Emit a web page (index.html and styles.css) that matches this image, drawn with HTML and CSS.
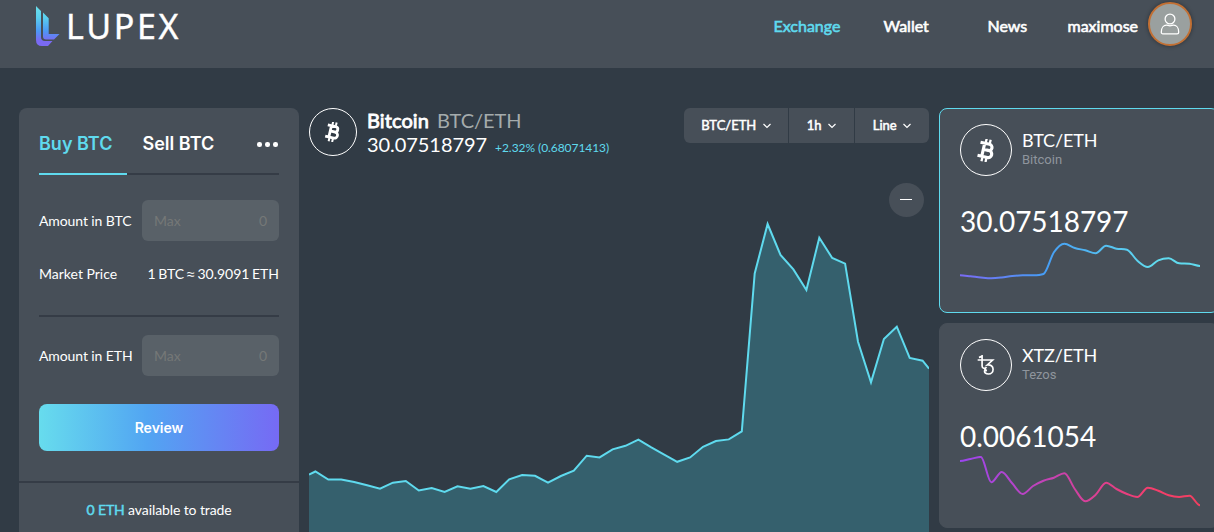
FILE: index.html
```
<!DOCTYPE html>
<html lang="en">
    <head>
        <meta charset="UTF-8">
        <meta name="viewport" content="width=device-width, initial-scale=1.0">
        <title>Lupex</title>
        <link rel="stylesheet" href="styles.css">
    </head>
    <body>
        <svg class="defs" width="0" height="0">
            <symbol id="btc" viewBox="0 0 24 24">
                <g transform="rotate(13 12 12)" fill="none" stroke="currentColor" stroke-width="3.3">
                    <path d="M4 5h9.700a3.200 3.200 0 0 1 0 6.500H8.500M4 19h10.500a3.700 3.700 0 0 0 0-7.500H8.500M8.500 4.500v15"/>
                    <path stroke-width="2.400" d="M9.400 0v4M13.700 0v4M9.400 20v4M13.700 20v4"/>
                </g>
            </symbol>
            <symbol id="xtz" viewBox="0 0 24 24">
                <path fill="none" stroke="currentColor" stroke-width="2" d="M2 6H20L13.500 12c4-.6 7 1.400 7 5 0 3.500-2.400 5.800-5.500 5.800-2.700 0-4.800-1.400-4.800-3.500 0-1.200.8-2 1.800-2M3.500 2.800c1.500-.2 2.700-.7 3.800-1.800v12.200c0 3 3.400 3.700 5.400 1.400"/>
                <circle cx="11.900" cy="18.600" r="1.400" fill="currentColor"/>
            </symbol>
        </svg>

        <header class="header">
            <a class="logo">
                <svg width="25" height="42" viewBox="0 0 25 42">
                    <defs>
                        <linearGradient id="logo-fill" gradientUnits="userSpaceOnUse" x1="0" y1="0" x2="0" y2="42">
                            <stop offset="0.1" stop-color="#67dcec"/>
                            <stop offset="0.3" stop-color="#5acfee"/>
                            <stop offset="0.62" stop-color="#4c98f5"/>
                            <stop offset="0.85" stop-color="#7a6af3"/>
                        </linearGradient>
                    </defs>
                    <path fill="url(#logo-fill)" d="M1 1l5 5v26q0 4 4 4h7.500l-4.500 5H7q-6 0-6-6z"/>
                    <path fill="url(#logo-fill)" d="M8 7.500l5.700 5.700V29h10.800l-5.500 5.500H11q-3 0-3-3z"/>
                </svg>
                <span>LUPEX</span>
            </a>
            <nav class="nav">
                <a class="exchange active">Exchange</a>
                <a class="wallet">Wallet</a>
                <a class="news">News</a>
                <a class="user">maximose</a>
                <div class="avatar">
                    <svg width="20" height="24" viewBox="0 0 20 24" fill="none" stroke="#fff" stroke-width="1.300">
                        <circle cx="10" cy="7" r="4.900"/>
                        <path d="M1.300 20.200c0-5 2.700-7 5-7 1.500 0 2 .6 3.700.6s2.200-.6 3.700-.6c2.300 0 5 2 5 7 0 1-.6 1.600-1.600 1.600H2.900c-1 0-1.600-.6-1.600-1.600z"/>
                    </svg>
                </div>
            </nav>
        </header>

        <main class="page">
            <section class="trade">
                <div class="tabs">
                    <a class="tab active">Buy BTC</a>
                    <a class="tab">Sell BTC</a>
                    <div class="dots"><i></i><i></i><i></i></div>
                </div>
                <div class="row">
                    <label>Amount in BTC</label>
                    <div class="field"><span>Max</span><span>0</span></div>
                </div>
                <div class="row price">
                    <span>Market Price</span>
                    <span class="rate">1 BTC <span class="approx">≈</span> 30.9091 ETH</span>
                </div>
                <div class="row eth">
                    <label>Amount in ETH</label>
                    <div class="field"><span>Max</span><span>0</span></div>
                </div>
                <button class="review">Review</button>
                <div class="available"><b>0 ETH</b>&nbsp;available to trade</div>
            </section>

            <section class="market">
                <div class="market-head">
                    <div class="coin"><svg width="20" height="20"><use href="#btc"/></svg></div>
                    <div class="quote">
                        <div><strong>Bitcoin</strong><span class="pair">BTC/ETH</span></div>
                        <div>30.07518797<span class="change">+2.32% (0.68071413)</span></div>
                    </div>
                    <div class="filters">
                        <div class="filter">BTC/ETH <svg width="8" height="6" viewBox="0 0 8 6"><path d="M.5 1l3.500 3.500L7.500 1"/></svg></div>
                        <div class="filter">1h <svg width="8" height="6" viewBox="0 0 8 6"><path d="M.5 1l3.500 3.500L7.500 1"/></svg></div>
                        <div class="filter">Line <svg width="8" height="6" viewBox="0 0 8 6"><path d="M.5 1l3.500 3.500L7.500 1"/></svg></div>
                    </div>
                </div>
                <div class="chart">
                    <svg width="620" height="376" viewBox="0 -16 620 376">
                        <path id="area" class="area"/>
                        <path id="line" class="line"/>
                    </svg>
                    <div class="zoom-out"></div>
                </div>
            </section>

            <aside class="pairs">
                <div class="card selected">
                    <div class="card-head">
                        <div class="coin"><svg width="23" height="23"><use href="#btc"/></svg></div>
                        <div><h3>BTC/ETH</h3><p>Bitcoin</p></div>
                    </div>
                    <div class="value">30.07518797</div>
                    <svg class="spark" width="240" height="52">
                        <defs>
                            <linearGradient id="blue" gradientUnits="userSpaceOnUse" x1="0" y1="0" x2="240" y2="0">
                                <stop offset="0" stop-color="#7a6af3"/>
                                <stop offset="0.35" stop-color="#469df5"/>
                                <stop offset="0.8" stop-color="#60daee"/>
                            </linearGradient>
                        </defs>
                        <path id="spark-btc" stroke="url(#blue)"/>
                    </svg>
                </div>
                <div class="card">
                    <div class="card-head">
                        <div class="coin"><svg width="20" height="20"><use href="#xtz"/></svg></div>
                        <div><h3>XTZ/ETH</h3><p>Tezos</p></div>
                    </div>
                    <div class="value">0.0061054</div>
                    <svg class="spark" width="240" height="52">
                        <defs>
                            <linearGradient id="pink" gradientUnits="userSpaceOnUse" x1="0" y1="0" x2="240" y2="0">
                                <stop offset="0" stop-color="#9b46f0"/>
                                <stop offset="0.8" stop-color="#f53e6c"/>
                                <stop offset="1" stop-color="#f23f60"/>
                            </linearGradient>
                        </defs>
                        <path id="spark-xtz" stroke="url(#pink)"/>
                    </svg>
                </div>
            </aside>
        </main>
        <script src="charts.js"></script>
    </body>
</html>
```
FILE: styles.css
```
* {
    box-sizing: border-box;
}
body {
    margin: 0;
    height: 532px;
    overflow: hidden;
    font-family: Lato, sans-serif;
    font-size: 14px;
    color: #fff;
    background-color: #313b45;
}
h3, p {
    margin: 0;
    font-weight: 400;
}
.defs {
    position: absolute;
}
.header {
    display: flex;
    justify-content: space-between;
    height: 68px;
    padding: 0 22px 0 35px;
    background-color: #474f58;
}
.logo {
    display: flex;
    padding-top: 5px;
}
.logo span {
    margin: 1px 0 0 6px;
    font-family: "Noto Sans", sans-serif;
    font-size: 34px;
    line-height: 40px;
    letter-spacing: 2.7px;
    -webkit-text-stroke: 0.4px;
}
.nav {
    display: flex;
    padding-top: 2px;
    font-size: 16px;
    line-height: 48px;
    -webkit-text-stroke: 0.6px;
}
.nav a {
    display: block;
}
.exchange {
    width: 110px;
}
.wallet {
    width: 104px;
}
.news {
    width: 80px;
}
.user {
    width: 80.5px;
}
.active {
    color: #5fdaee;
}
.avatar {
    display: flex;
    justify-content: center;
    align-items: center;
    width: 44px;
    height: 44px;
    border: 2px solid #c27034;
    border-radius: 50%;
    background-color: #9aa09f;
    box-shadow: 0 0 4px rgba(0, 0, 0, 0.4);
}
.page {
    display: grid;
    grid-template-columns: 280px 620px 280px;
    gap: 10px;
    height: 464px;
    padding: 40px 0 0 19px;
    overflow: hidden;
}

/* Buy / sell form */
.trade {
    height: 470px;
    padding: 0 20px;
    border-radius: 8px;
    background-color: #474f58;
}
.tabs {
    display: flex;
    height: 67px;
    border-bottom: 2px solid #353c46;
    font-family: Inter, sans-serif;
    font-size: 18px;
    font-weight: 600;
    line-height: 71px;
}
.tab {
    width: 88px;
    height: 67px;
    margin-right: 15.5px;
    white-space: nowrap;
}
.tab.active {
    border-bottom: 2px solid #5fdaee;
}
.dots {
    display: flex;
    gap: 3.5px;
    align-items: center;
    margin-left: auto;
    padding: 8px 1.5px 0 0;
}
.dots i {
    width: 4.5px;
    height: 4.5px;
    border-radius: 50%;
    background-color: #fff;
}
.row {
    display: flex;
    justify-content: space-between;
    align-items: center;
    margin-top: 25px;
}
.row label {
    letter-spacing: -0.1px;
}
.field {
    display: flex;
    justify-content: space-between;
    align-items: center;
    width: 137px;
    height: 41px;
    padding: 0 12px;
    border-radius: 6px;
    color: #757877;
    background-color: #596168;
}
.price {
    height: 76px;
    margin-top: 0;
    padding-bottom: 10px;
    border-bottom: 2px solid #353c46;
}
.rate {
    word-spacing: -1.1px;
}
.approx {
    margin: 0 0.3px;
    font-family: "Liberation Sans", sans-serif;
}
.eth {
    margin-top: 18px;
}
.review {
    display: block;
    width: 240px;
    height: 47px;
    margin-top: 28px;
    border: none;
    border-radius: 8px;
    font-family: Inter, sans-serif;
    font-size: 14px;
    font-weight: 600;
    color: #fff;
    background: linear-gradient(90deg, #67dced, #52a5f2 45%, #766af4);
}
.available {
    display: flex;
    justify-content: center;
    margin: 30px -20px 0;
    border-top: 2px solid #353c46;
    line-height: 53px;
    letter-spacing: -0.1px;
}
.available b {
    font-weight: 400;
    color: #5fdaee;
    -webkit-text-stroke: 0.5px;
}

/* Chart */
.coin {
    display: flex;
    justify-content: center;
    align-items: center;
    flex: none;
    border: 1px solid #fff;
    border-radius: 50%;
}
.market-head {
    display: flex;
    height: 48px;
}
.market-head .coin {
    width: 48px;
    height: 48px;
}
.quote {
    margin-left: 10px;
    font-size: 20px;
    line-height: 24px;
    letter-spacing: -0.06px;
}
.quote strong {
    font-weight: 400;
    letter-spacing: 0.1px;
    -webkit-text-stroke: 0.8px;
}
.pair {
    margin-left: 8px;
    color: #a4abac;
}
.change {
    margin-left: 8px;
    font-size: 12px;
    color: #5fdaee;
}
.filters {
    display: flex;
    gap: 1px;
    height: 35px;
    margin-left: auto;
    border-radius: 6px;
    overflow: hidden;
    font-size: 13px;
    line-height: 35px;
    -webkit-text-stroke: 0.5px;
}
.filter {
    padding: 0 17px;
    background-color: #474f58;
}
.filter:nth-child(2) {
    padding: 0 18px;
}
.filter:last-child {
    padding: 0 18px;
}
.filter svg {
    margin: 0 0 1px 3px;
    fill: none;
    stroke: #fff;
    stroke-width: 1.2;
}
.chart {
    position: relative;
}
.chart svg {
    display: block;
}
.area {
    fill: #35606d;
}
.line {
    fill: none;
    stroke: #5fdaee;
    stroke-width: 2;
}
.zoom-out {
    position: absolute;
    top: 27px;
    right: 5px;
    display: flex;
    justify-content: center;
    align-items: center;
    width: 35px;
    height: 34px;
    border-radius: 50%;
    background-color: #474f58;
}
.zoom-out::before {
    content: "";
    width: 12px;
    height: 1px;
    margin: 0 1px 1px 0;
    background-color: #fff;
}

/* Pair list */
.card {
    height: 205px;
    margin-bottom: 10px;
    padding: 15px 20px;
    border: 1px solid #474f58;
    border-radius: 8px;
    background-color: #474f58;
}
.card.selected {
    border-color: #5fdaee;
}
.card-head {
    display: flex;
    gap: 10px;
}
.card .coin {
    width: 52px;
    height: 52px;
}
.card h3 {
    padding-top: 5px;
    font-size: 18px;
    line-height: 22px;
    letter-spacing: -0.15px;
}
.card p {
    padding-top: 1px;
    font-family: Roboto, sans-serif;
    font-size: 13px;
    line-height: 15px;
    color: #8f959d;
}
.value {
    margin-top: 27px;
    font-size: 28px;
    line-height: 36px;
    letter-spacing: -0.05px;
}
.spark {
    display: block;
    margin-top: 2px;
}
.spark path {
    fill: none;
    stroke-width: 2;
}
```
FILE: charts.js
```
const history = [
    299.5, 307.5, 307.5, 310, 313.3, 316.7, 310.7, 309, 318.5, 316, 320, 314.3,
    316.7, 314, 320, 307.3, 303, 303.8, 310.7, 304, 298.7, 283.7, 285.4, 277.4,
    273.8, 267.7, 275.4, 282.7, 289.8, 285.4, 274.8, 269, 267.4, 259.4, 101.4,
    52, 83, 97.4, 118, 65.7, 86, 91.7, 169.7, 210.4, 167, 154.7, 186, 188.7
];
const points = history.map((y, i) => (6.4 + i * 12.92).toFixed(1) + ' ' + y);
const line = 'M0 302.5L' + points.join('L') + 'L620 196.7';
document.getElementById('line').setAttribute('d', line);
document.getElementById('area').setAttribute('d', line + 'V360H0z');

// smooth curve through evenly spaced values
function spark(id, values) {
    const step = 240 / (values.length - 1);
    const slope = i => {
        if (i === 0 || i === values.length - 1) return 0;
        const a = values[i] - values[i - 1];
        const b = values[i + 1] - values[i];
        return a * b <= 0 ? 0 : Math.sign(a) * Math.min(Math.abs(a + b) / 2, 3 * Math.abs(a), 3 * Math.abs(b));
    };
    let d = 'M0 ' + values[0];
    for (let i = 1; i < values.length; i++) {
        const x = i * step;
        d += 'C' + [
            x - step * 2 / 3, values[i - 1] + slope(i - 1) / 3,
            x - step / 3, values[i] - slope(i) / 3,
            x, values[i]
        ].join(' ');
    }
    document.getElementById(id).setAttribute('d', d);
}

spark('spark-btc', [34.3, 35.3, 36.5, 37.3, 36.5, 35, 34.3, 34.3, 33, 11.3, 2.7, 7, 9.3, 12.3, 4.7, 7.7, 8.7, 19.7, 26, 19.3, 17.3, 22.3, 22.7, 25]);
spark('spark-xtz', [5, 3, 0.9, 26.3, 16, 27.3, 38, 30, 24.7, 21.7, 17.3, 33, 45.3, 38.7, 26.7, 33, 38, 41, 31.7, 34.7, 39.3, 41, 39.7, 49.3]);
```
